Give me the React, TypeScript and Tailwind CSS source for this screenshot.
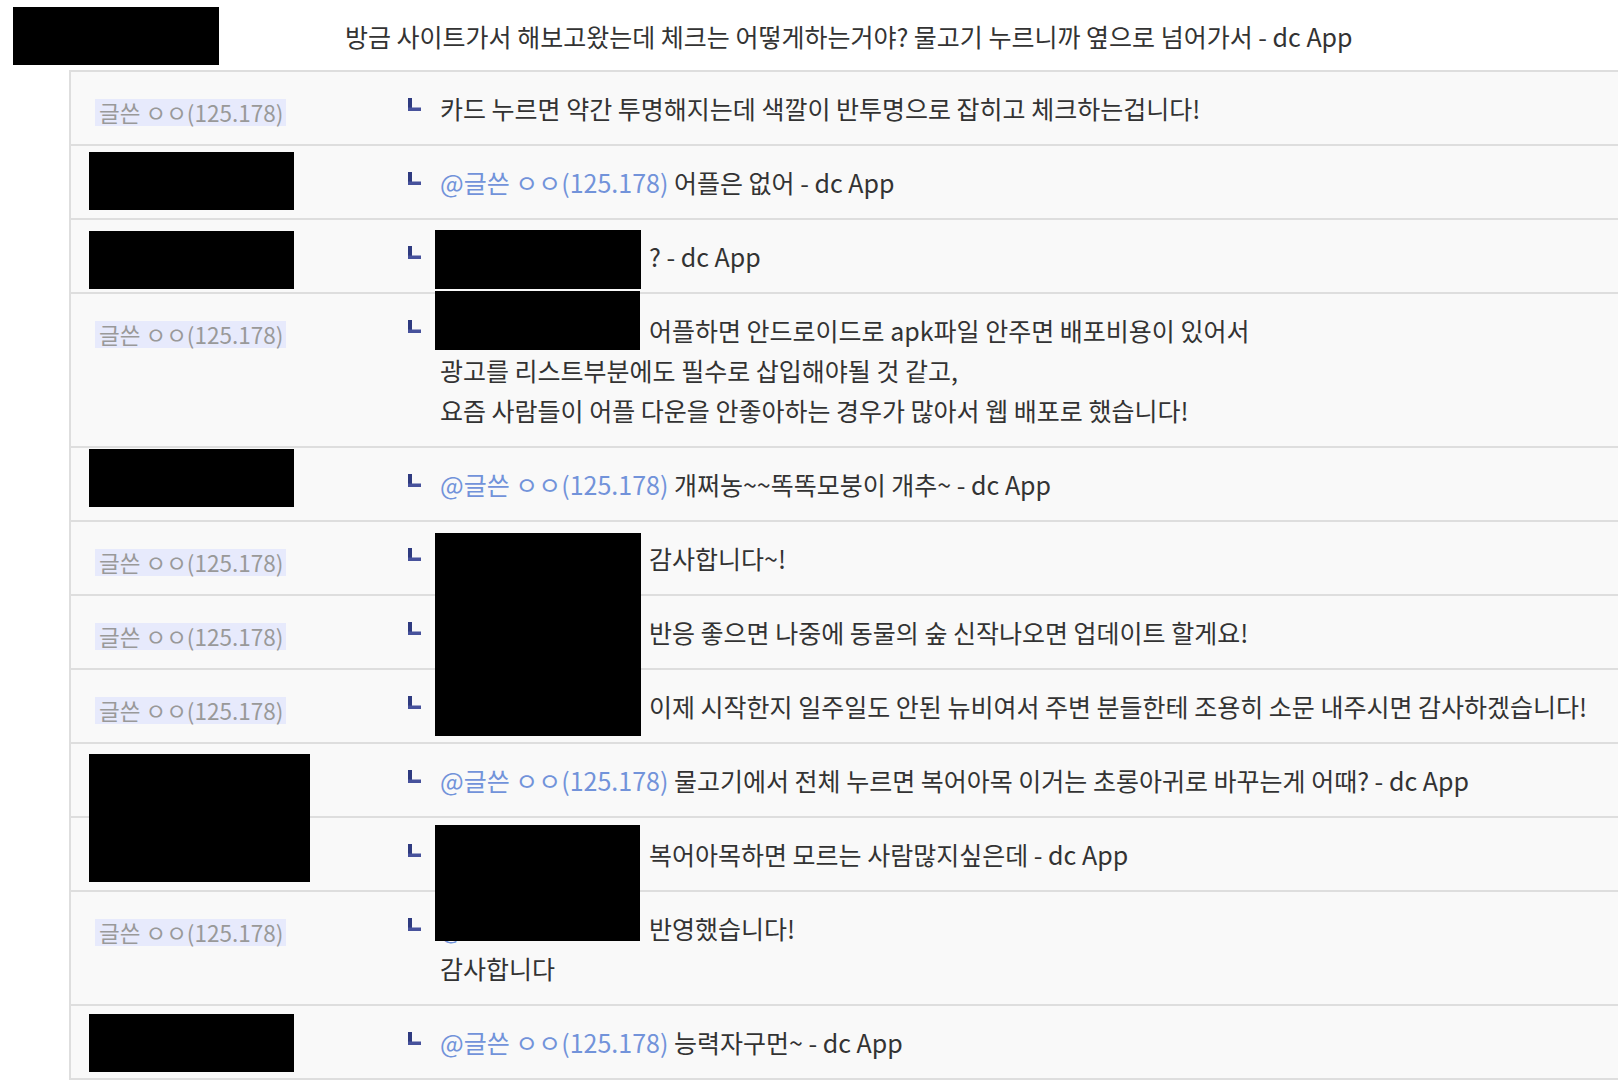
type Row = {
  name: 'label' | 'hidden'
  mention: 'visible' | 'hidden' | 'none'
  lines: string[]
}

const rows: Row[] = [
  { name: 'label', mention: 'none', lines: ['카드 누르면 약간 투명해지는데 색깔이 반투명으로 잡히고 체크하는겁니다!'] },
  { name: 'hidden', mention: 'visible', lines: ['어플은 없어 - dc App'] },
  { name: 'hidden', mention: 'hidden', lines: ['? - dc App'] },
  {
    name: 'label',
    mention: 'hidden',
    lines: [
      '어플하면 안드로이드로 apk파일 안주면 배포비용이 있어서',
      '광고를 리스트부분에도 필수로 삽입해야될 것 같고,',
      '요즘 사람들이 어플 다운을 안좋아하는 경우가 많아서 웹 배포로 했습니다!',
    ],
  },
  { name: 'hidden', mention: 'visible', lines: ['개쩌농~~똑똑모붕이 개추~ - dc App'] },
  { name: 'label', mention: 'hidden', lines: ['감사합니다~!'] },
  { name: 'label', mention: 'hidden', lines: ['반응 좋으면 나중에 동물의 숲 신작나오면 업데이트 할게요!'] },
  { name: 'label', mention: 'hidden', lines: ['이제 시작한지 일주일도 안된 뉴비여서 주변 분들한테 조용히 소문 내주시면 감사하겠습니다!'] },
  { name: 'hidden', mention: 'visible', lines: ['물고기에서 전체 누르면 복어아목 이거는 초롱아귀로 바꾸는게 어때? - dc App'] },
  { name: 'hidden', mention: 'hidden', lines: ['복어아목하면 모르는 사람많지싶은데 - dc App'] },
  { name: 'label', mention: 'hidden', lines: ['반영했습니다!', '감사합니다'] },
  { name: 'hidden', mention: 'visible', lines: ['능력자구먼~ - dc App'] },
]

// blacked-out parts of the screenshot: [left, top, width, height]
const redactions: [number, number, number, number][] = [
  [13, 7, 206, 58],
  [89, 152, 205, 58],
  [89, 231, 205, 58],
  [435, 230, 206, 59],
  [435, 291, 205, 59],
  [89, 449, 205, 58],
  [435, 533, 206, 203],
  [89, 754, 221, 128],
  [435, 825, 205, 116],
  [89, 1014, 205, 58],
]

function ReplyArrow() {
  return (
    <svg width="13" height="13" viewBox="0 0 13 13" className="mt-[10px] block">
      <rect x="0" y="0" width="4" height="13" fill="#2f3b80" />
      <rect x="0" y="9.5" width="13" height="3.5" fill="#47529c" />
    </svg>
  )
}

function NameLabel() {
  return (
    <span className="inline-block bg-[#e7eafc] pl-[4px] pr-[3px] text-[22.5px] leading-[27px] text-[#999] align-middle">
      글쓴 ㅇㅇ(125.178)
    </span>
  )
}

export default function App() {
  return (
    <div className="relative min-h-[1090px] w-full overflow-hidden bg-white font-['Noto_Sans_CJK_KR',sans-serif] text-[25px] text-[#333]">
      <div className="flex h-[70px] items-center pl-[345px] pt-[4px] whitespace-nowrap">
        방금 사이트가서 해보고왔는데 체크는 어떻게하는거야? 물고기 누르니까 옆으로 넘어가서 - dc App
      </div>

      <div className="ml-[69px] border-l-2 border-t-2 border-[#dedede] bg-[#f9f9f9]">
        {rows.map((r, i) => (
          <div key={i} className="flex border-b-2 border-[#dedede] py-4 leading-[40px]">
            <div className="w-[337px] shrink-0 pl-[24px]">{r.name === 'label' && <NameLabel />}</div>
            <div className="w-[32px] shrink-0">
              <ReplyArrow />
            </div>
            <div className="whitespace-nowrap">
              {r.lines.map((line, j) => (
                <div key={j}>
                  {j === 0 && r.mention === 'visible' && (
                    <span className="text-[#7293da]">@글쓴 ㅇㅇ(125.178) </span>
                  )}
                  {j === 0 && r.mention === 'hidden' && (
                    <span className="inline-block w-[209px] overflow-hidden align-top text-[#7293da]">@ㅇㅇ</span>
                  )}
                  {line}
                </div>
              ))}
            </div>
          </div>
        ))}
      </div>

      {redactions.map(([x, y, w, h], i) => (
        <div
          key={i}
          className="absolute bg-black"
          style={{ left: x, top: y, width: w, height: h }}
        />
      ))}
    </div>
  )
}
